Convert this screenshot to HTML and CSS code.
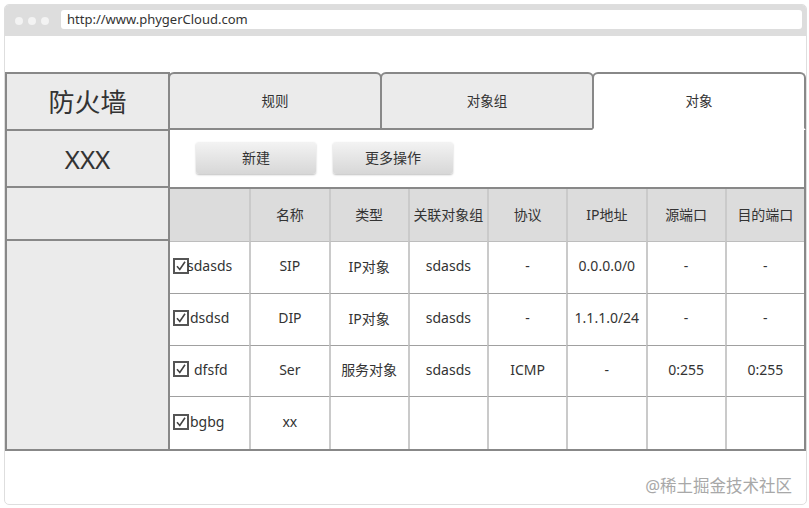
FILE: index.html
```html
<!DOCTYPE html>
<html>
<head>
<meta charset="utf-8">
<title>防火墙 - 对象</title>
<link rel="stylesheet" href="styles.css">
</head>
<body>

<div class="frame">
  <div class="chrome">
    <span class="dot"></span><span class="dot"></span><span class="dot"></span>
    <div class="url">http://www.phygerCloud.com</div>
  </div>

  <div class="page">
    <div class="board">

      <div class="side">
        <div class="side-title">防火墙</div>
        <div class="side-name">XXX</div>
        <div class="side-head"></div>
        <div class="side-rest"></div>
      </div>

      <div class="main">
        <ul class="tabs">
          <li class="tab">规则</li>
          <li class="tab">对象组</li>
          <li class="tab active">对象</li>
        </ul>

        <div class="toolbar">
          <button class="btn">新建</button>
          <button class="btn">更多操作</button>
        </div>

        <div class="grid">
          <div class="cell head"></div>
          <div class="cell head">名称</div>
          <div class="cell head">类型</div>
          <div class="cell head">关联对象组</div>
          <div class="cell head">协议</div>
          <div class="cell head">IP地址</div>
          <div class="cell head">源端口</div>
          <div class="cell head">目的端口</div>

          <div class="cell first"><span class="check"><svg viewBox="0 0 16 16" width="16" height="16"><rect x="1" y="1" width="14" height="14" fill="#fff" stroke="#555" stroke-width="2"/><path d="M4 8.2 L6.8 11.5 L12 3.8" fill="none" stroke="#444" stroke-width="1.6"/></svg></span><span class="tight">sdasds</span></div>
          <div class="cell">SIP</div>
          <div class="cell">IP对象</div>
          <div class="cell">sdasds</div>
          <div class="cell">-</div>
          <div class="cell">0.0.0.0/0</div>
          <div class="cell">-</div>
          <div class="cell">-</div>

          <div class="cell first"><span class="check"><svg viewBox="0 0 16 16" width="16" height="16"><rect x="1" y="1" width="14" height="14" fill="#fff" stroke="#555" stroke-width="2"/><path d="M4 8.2 L6.8 11.5 L12 3.8" fill="none" stroke="#444" stroke-width="1.6"/></svg></span>dsdsd</div>
          <div class="cell">DIP</div>
          <div class="cell">IP对象</div>
          <div class="cell">sdasds</div>
          <div class="cell">-</div>
          <div class="cell">1.1.1.0/24</div>
          <div class="cell">-</div>
          <div class="cell">-</div>

          <div class="cell first"><span class="check"><svg viewBox="0 0 16 16" width="16" height="16"><rect x="1" y="1" width="14" height="14" fill="#fff" stroke="#555" stroke-width="2"/><path d="M4 8.2 L6.8 11.5 L12 3.8" fill="none" stroke="#444" stroke-width="1.6"/></svg></span><span class="spaced">dfsfd</span></div>
          <div class="cell">Ser</div>
          <div class="cell">服务对象</div>
          <div class="cell">sdasds</div>
          <div class="cell">ICMP</div>
          <div class="cell">-</div>
          <div class="cell">0:255</div>
          <div class="cell">0:255</div>

          <div class="cell first last"><span class="check"><svg viewBox="0 0 16 16" width="16" height="16"><rect x="1" y="1" width="14" height="14" fill="#fff" stroke="#555" stroke-width="2"/><path d="M4 8.2 L6.8 11.5 L12 3.8" fill="none" stroke="#444" stroke-width="1.6"/></svg></span>bgbg</div>
          <div class="cell last">xx</div>
          <div class="cell last"></div>
          <div class="cell last"></div>
          <div class="cell last"></div>
          <div class="cell last"></div>
          <div class="cell last"></div>
          <div class="cell last"></div>
        </div>
      </div>

    </div>
  </div>

  <div class="watermark">@稀土掘金技术社区</div>
</div>

</body>
</html>
```

FILE: styles.css
```css
body { margin: 0; background: #fff; color: #333;
font: 14px "Noto Sans", "Noto Sans CJK SC", sans-serif; }

.frame { position: relative; margin: 4px 0 0 4px; width: 801px; height: 499px;
border: 1px solid #dedede; border-radius: 5px; overflow: hidden; background: #fff; }

.chrome { height: 31px; background: #dddddd; display: flex; align-items: center; padding-left: 10px; }
.dot { width: 8px; height: 8px; border-radius: 50%; background: #f3f3f3; margin-right: 5px; }
.url { flex: 1; height: 19px; margin: 0 4px 2px 7px; background: #fff; border-radius: 3px;
padding-left: 6px; font-size: 13px; line-height: 19px; color: #333; }

.page { padding-top: 36px; }

.board { display: flex; height: 379px; }

/* left column */
.side { width: 161px; border-left: 2px solid #888; border-bottom: 2px solid #888;
background: #ebebeb; display: flex; flex-direction: column; }
.side-title { height: 54px; border-top: 2px solid #888; border-bottom: 2px solid #888;
display: flex; align-items: center; justify-content: center; font-size: 26px; padding-bottom: 1px; }
.side-name { height: 55px; border-bottom: 2px solid #888;
display: flex; align-items: center; justify-content: center; font-size: 26px; }
.side-head { height: 51px; border-bottom: 2px solid #888; }
.side-rest { flex: 1; }

/* right column */
.main { flex: 1; display: flex; flex-direction: column; border-left: 2px solid #888; }

.tabs { display: flex; height: 58px; margin: 0 0 0 -2px; padding: 0; list-style: none; }
.tab { flex: 1; display: flex; align-items: center; justify-content: center; padding-bottom: 2px;
background: #ebebeb; border: 2px solid #888; border-radius: 6px 6px 0 0; font-size: 13.5px; }
.tab + .tab { margin-left: -2px; }
.tab.active { background: #fff; border-bottom-color: #fff; }

.toolbar { height: 55px; border-right: 2px solid #888; border-bottom: 2px solid #888;
display: flex; align-items: center; gap: 17px; padding: 0 0 2px 26px; }
.btn { width: 120px; height: 32px; border: 0; border-radius: 3px; color: #333;
font: 14px "Noto Sans", "Noto Sans CJK SC", sans-serif; padding-bottom: 2px;
background: linear-gradient(#f3f3f3, #d7d7d7); box-shadow: 0 1px 2px rgba(0,0,0,.25); }

.grid { flex: 1; display: grid; grid-template-columns: repeat(8, 1fr);
grid-template-rows: 53px repeat(4, 1fr); border-right: 2px solid #888; border-bottom: 2px solid #888; }
.cell { display: flex; align-items: center; justify-content: center; white-space: nowrap;
padding-bottom: 3px; border-left: 2px solid #cacaca; border-bottom: 1px solid #a0a0a0; }
.cell:nth-child(8n+1) { border-left: 0; }
.cell.head { background: #dcdcdc; border-bottom: 1px solid #bdbdbd; }
.cell.last { border-bottom: 0; }
.cell.first { justify-content: flex-start; padding-left: 3px; }

.check { display: flex; width: 16px; height: 16px; margin-right: 1px; }
.tight { margin-left: -3px; }
.spaced { margin-left: 4px; }

.watermark { position: absolute; right: 14px; top: 468px; font-size: 16.5px; color: #a8a8a8; }
```
